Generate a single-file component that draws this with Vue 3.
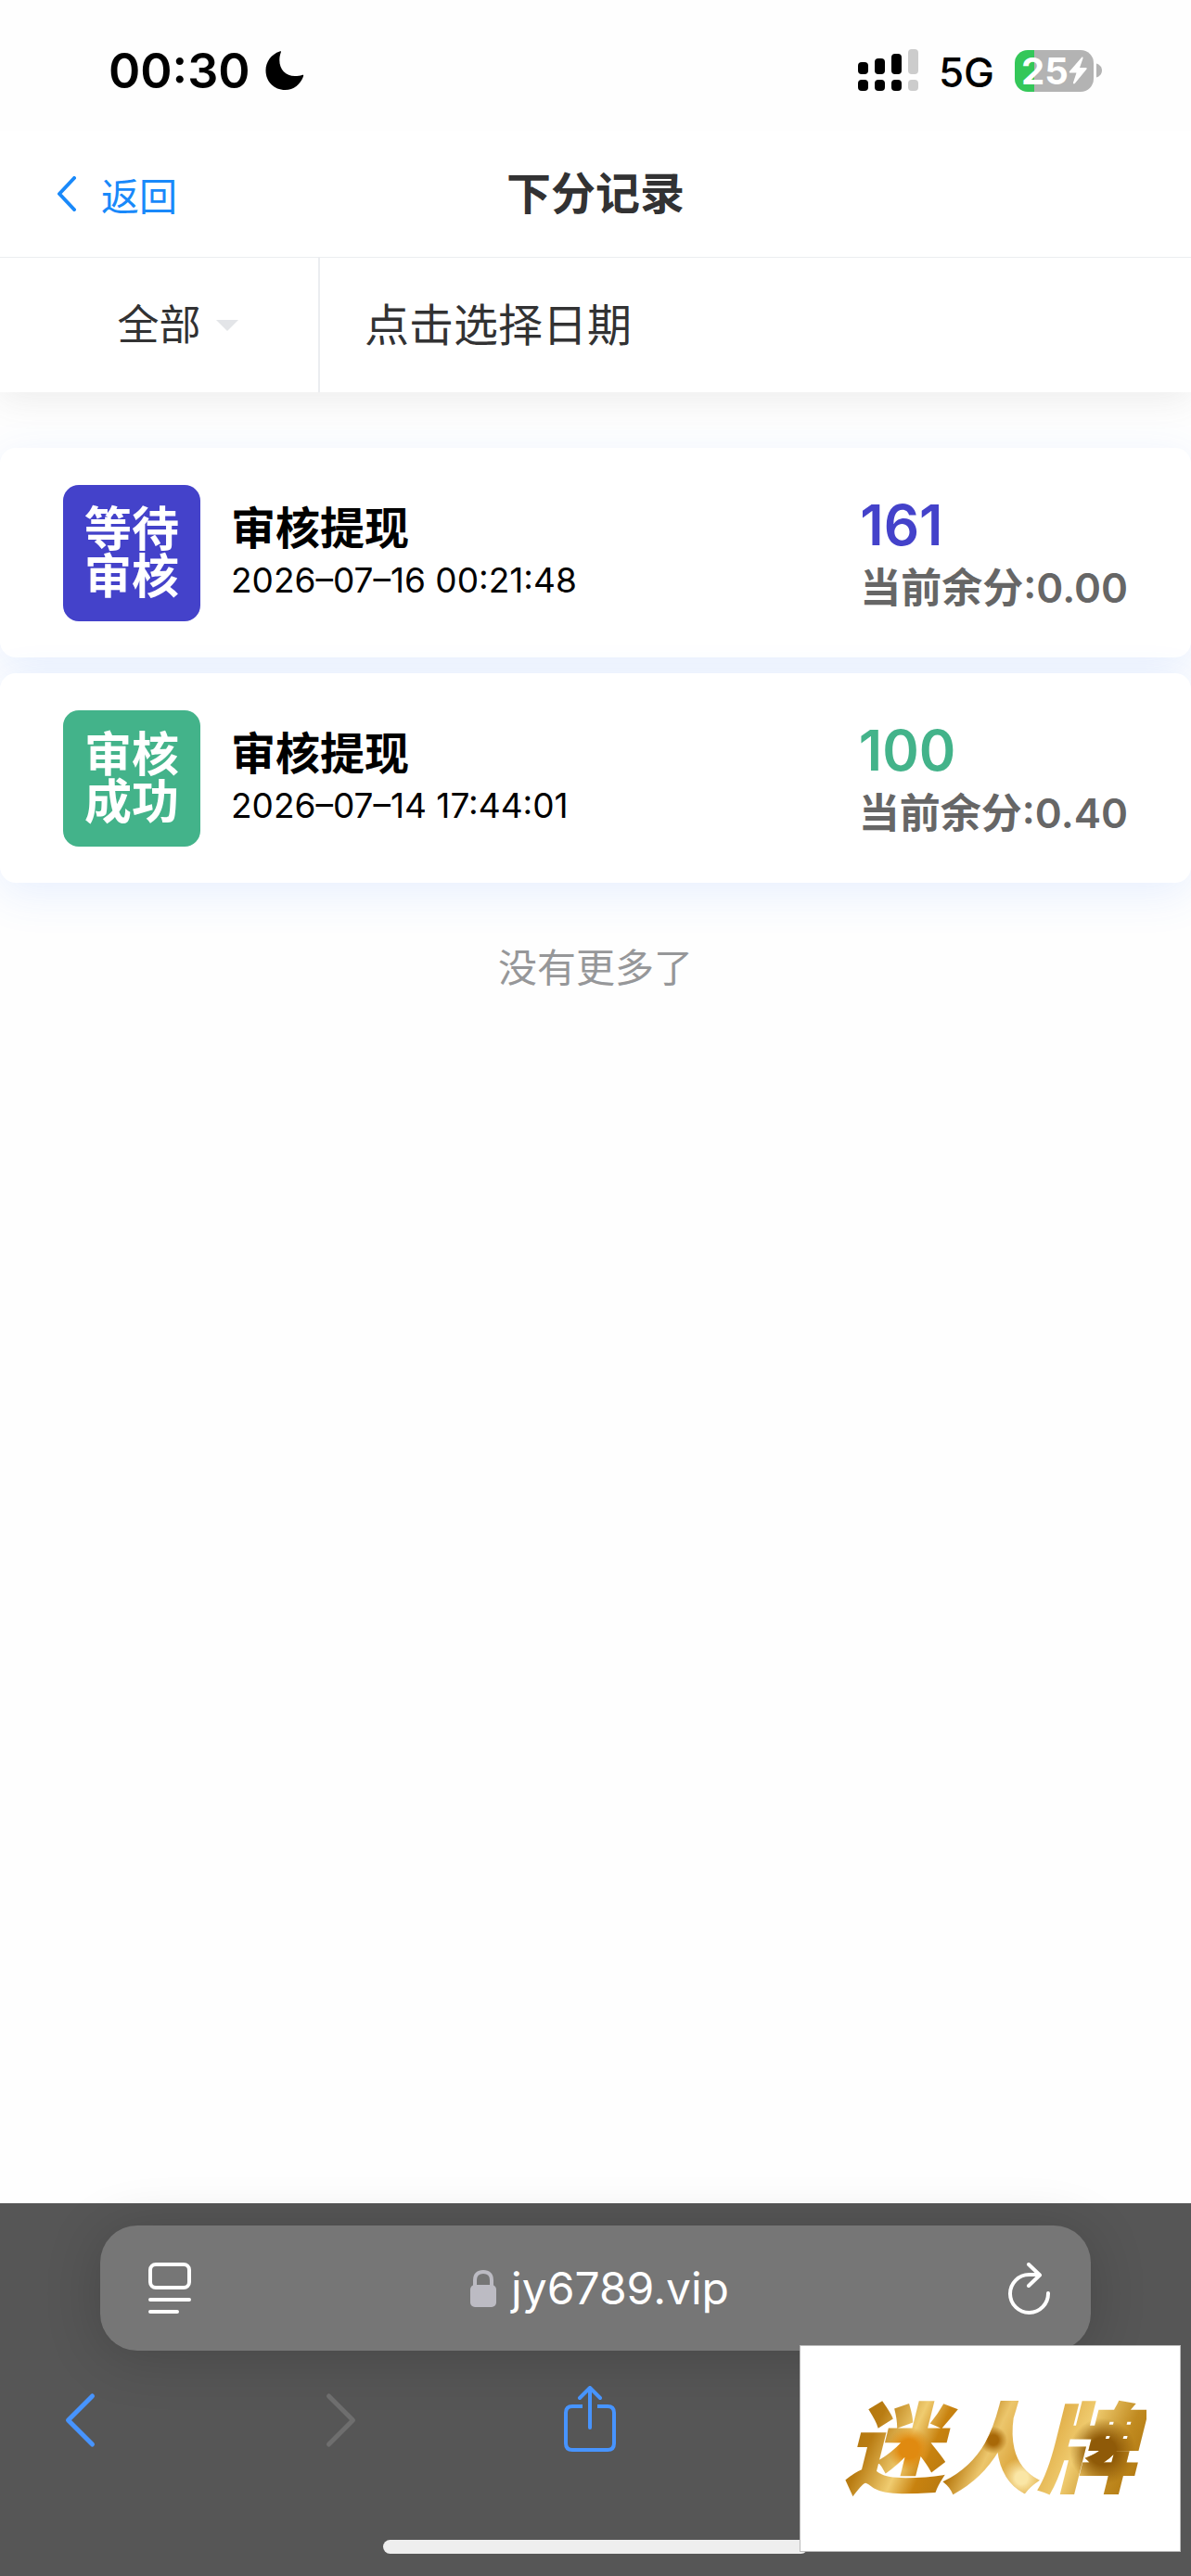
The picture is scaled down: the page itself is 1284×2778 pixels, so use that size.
<template>
  <div class="page">
    <div class="status-bar">
      <div class="status-left">
        <span class="clock">00:30</span>
        <svg class="moon" viewBox="0 0 42 42"><path d="M15.5 0.5C17 0 17.2 0.6 16.8 1.6C15.8 4 15.3 7 15.3 9.8C15.3 20 22 27 32 27C35 27 37.500 26.600 39.500 26C41 25.500 41.500 26 41 27.500C38 36 30.500 42 21.500 42C9.500 42 0.500 33 0.500 21C0.500 11.500 6.500 3.500 15.500 0.500Z" fill="#000" /></svg>
      </div>
      <div class="status-right">
        <svg class="signal" viewBox="0 0 66 46">
          <g fill="#000">
            <rect x="0" y="14" width="11" height="13" rx="4" />
            <rect x="18" y="10" width="11" height="17" rx="4" />
            <rect x="36" y="5" width="11" height="22" rx="4" />
            <rect x="0" y="33" width="11" height="12" rx="4" />
            <rect x="18" y="33" width="11" height="12" rx="4" />
            <rect x="36" y="33" width="11" height="12" rx="4" />
          </g>
          <g fill="#ccc">
            <rect x="54" y="0" width="11" height="27" rx="4" />
            <rect x="54" y="33" width="11" height="12" rx="4" />
          </g>
        </svg>
        <span class="network">5G</span>
        <div class="battery">
          <div class="battery-body">
            <span>25</span>
            <svg class="bolt" viewBox="0 0 20 30"><path d="M14 1L1 16C0.500 17 1 17.500 2 17.500H8.500L5 28C4.800 29.500 6 29.800 7 28.800L19.500 13.500C20 12.500 19.500 12 18.500 12H12L15.500 2C15.800 0.500 14.800 0.200 14 1Z" fill="#fff" /></svg>
          </div>
          <svg class="battery-nub" viewBox="0 0 6 16"><path d="M0 0.500C3.500 1.500 6 4.500 6 8S3.500 14.500 0 15.500Z" fill="#b3b3b3" /></svg>
        </div>
      </div>
    </div>

    <header class="nav-bar">
      <button class="back-btn">
        <svg viewBox="0 0 22 38"><path d="M19 2L3 19L19 36" fill="none" stroke="#1989fa" stroke-width="4" stroke-linecap="round" stroke-linejoin="round" /></svg>
        <span>返回</span>
      </button>
      <h1>下分记录</h1>
    </header>

    <div class="filter-bar">
      <label class="type-filter">
        <select v-model="selectedType" aria-label="类型">
          <option v-for="type in types" :key="type" :value="type">{{ type }}</option>
        </select>
        <svg viewBox="0 0 24 12"><path d="M0 0H24L12 12Z" fill="#e3e5e8" /></svg>
      </label>
      <button class="date-filter">点击选择日期</button>
    </div>

    <main class="records">
      <div v-for="item in records" :key="item.time" class="record" :class="item.status">
        <div class="badge">
          <span>{{ item.badge }}</span>
        </div>
        <div class="info">
          <h2>{{ item.title }}</h2>
          <time>{{ item.time }}</time>
        </div>
        <div class="score">
          <strong>{{ item.amount }}</strong>
          <span>当前余分:{{ item.balance }}</span>
        </div>
      </div>
      <p class="finished">没有更多了</p>
    </main>

    <footer class="browser-bar">
      <div class="address">
        <button aria-label="页面菜单">
          <svg class="reader-icon" viewBox="0 0 46 56" fill="none" stroke="#fff" stroke-width="4" stroke-linecap="round"><rect x="2" y="2" width="42" height="25" rx="6" /><path d="M2 40H44M2 53H31" /></svg>
        </button>
        <a href="#" class="domain">
          <svg class="lock-icon" viewBox="0 0 28 40"><path d="M5 18V11C5 5 8.500 2 14 2S23 5 23 11V18" fill="none" stroke="#bcbbc3" stroke-width="4" /><rect x="0" y="16" width="28" height="24" rx="5" fill="#bcbbc3" /></svg>
          <span>jy6789.vip</span>
        </a>
        <button aria-label="刷新">
          <svg class="reload-icon" viewBox="0 0 46 56" fill="none" stroke="#fff" stroke-width="4" stroke-linecap="round" stroke-linejoin="round"><path d="M43 33A20.500 20.500 0 1 1 22.500 13H33" /><path d="M22 2L34 13.500L22 25" /></svg>
        </button>
      </div>
      <nav class="tools">
        <button aria-label="后退">
          <svg viewBox="0 0 64 72"><path d="M41.500 11L15.500 37L41.500 63" fill="none" stroke="#4794ff" stroke-width="5" stroke-linecap="round" stroke-linejoin="round" /></svg>
        </button>
        <button aria-label="前进" disabled>
          <svg viewBox="0 0 64 72"><path d="M23.500 11L49.500 37L23.500 63" fill="none" stroke="#6e6e6e" stroke-width="5" stroke-linecap="round" stroke-linejoin="round" /></svg>
        </button>
        <button aria-label="分享">
          <svg viewBox="0 0 64 72" fill="none" stroke="#4794ff" stroke-width="4" stroke-linecap="round" stroke-linejoin="round"><path d="M24 22H13Q6 22 6 29V62Q6 69 13 69H51Q58 69 58 62V29Q58 22 51 22H40" stroke-linecap="butt" /><path d="M32 45V3M21 13L32 2L43 13" /></svg>
        </button>
      </nav>
      <div class="home-indicator"></div>
    </footer>

    <div class="float-logo"><span>迷人牌</span></div>
  </div>
</template>

<script setup>
import { ref } from 'vue';

const types = ['全部'];
const selectedType = ref('全部');

const records = ref([
  {
    status: 'pending',
    badge: '等待审核',
    title: '审核提现',
    time: '2026–07–16 00:21:48',
    amount: 161,
    balance: '0.00'
  },
  {
    status: 'success',
    badge: '审核成功',
    title: '审核提现',
    time: '2026–07–14 17:44:01',
    amount: 100,
    balance: '0.40'
  }
]);
</script>

<style>
body { margin: 0; background: #fefefe; }
</style>

<style scoped>
.page {
  min-height: 100vh; display: flex; flex-direction: column; color: #323233;
  font-family: Inter, "Noto Sans CJK SC", sans-serif;
}
button, select { font-family: inherit; color: inherit; background: transparent; border: none; padding: 0; margin: 0; cursor: pointer; }
svg { display: block; flex-shrink: 0; }

.status-bar { height: 141px; box-sizing: border-box; padding: 46px 96px 0 117px; display: flex; justify-content: space-between; color: #000; }
.status-left, .status-right { display: flex; align-items: center; height: 60px; }
.status-left { gap: 16px; }
.clock { font-size: 52px; font-weight: 600; }
.moon { width: 42px; height: 42px; }
.signal { width: 66px; height: 46px; }
.network { font-size: 44px; font-weight: 500; margin: 4px 22px 0 21px; }
.battery { display: flex; align-items: center; gap: 3px; }
.battery-body {
  width: 85px; height: 45px; border-radius: 14px; display: flex; align-items: center; justify-content: center;
  background: linear-gradient(to right, #34c759 25%, #b3b3b3 25%); color: #fff; font-size: 40px; font-weight: 700;
}
.bolt { width: 20px; height: 30px; }
.battery-nub { width: 6px; height: 16px; }

.nav-bar {
  position: relative; z-index: 1; height: 136px; display: grid; grid-template-columns: 1fr auto 1fr; align-items: center;
  background: #fff; border-bottom: 1px solid #ebedf0;
}
.back-btn { justify-self: start; display: flex; align-items: center; gap: 26px; padding-left: 61px; color: #1989fa; font-size: 41px; }
.back-btn svg { width: 22px; height: 38px; }
.nav-bar h1 { margin: 0; padding-bottom: 8px; font-size: 48px; font-weight: 700; }

.filter-bar { height: 145px; display: flex; background: #fff; box-shadow: 0 6px 36px rgba(100, 101, 102, 0.12); }
.type-filter { flex: 0 0 345px; box-sizing: border-box; padding-left: 40px; display: flex; align-items: center; justify-content: center; gap: 15px; border-right: 2px solid #ebedf0; }
.type-filter select { appearance: none; font-size: 45px; }
.type-filter svg { width: 24px; height: 12px; }
.date-filter { flex: 1; padding: 0 0 8px 48px; text-align: left; font-size: 48px; }

.records { flex: 1; padding-top: 60px; display: flex; flex-direction: column; gap: 17px; }
.record {
  height: 226px; box-sizing: border-box; padding: 0 68px; display: flex; align-items: center;
  background: #fff; border-radius: 17px; box-shadow: 0 12px 48px rgba(64, 128, 255, 0.12);
}
.badge {
  width: 148px; height: 147px; border-radius: 17px; display: flex; align-items: center; justify-content: center;
  color: #fff; font-size: 51px; font-weight: 700; line-height: 51px;
}
.badge span { width: 2em; }
.info { flex: 1; padding-left: 33px; color: #000; }
.info h2 { margin: 0; font-size: 48px; font-weight: 700; line-height: 60px; }
.info time { display: block; font-size: 37px; line-height: 52px; }
.score { display: flex; flex-direction: column; padding-top: 4px; }
.score strong { font-size: 60px; font-weight: 600; line-height: 72px; }
.score span { color: #666; font-size: 44px; font-weight: 600; line-height: 64px; }
.pending .badge { background: #4442ca; }
.pending strong { color: #4442ca; }
.success .badge { background: #43b38a; }
.success strong { color: #43b38a; }
.finished { margin: 43px 0 0; text-align: center; font-size: 42px; line-height: 64px; color: #969799; }

.browser-bar { position: relative; padding: 24px 0; background: #565656; display: flex; flex-direction: column; }
.address {
  margin: 0 108px; height: 135px; box-sizing: border-box; padding: 0 43px 0 52px; border-radius: 40px;
  display: flex; align-items: center; justify-content: space-between; background: #767676; box-shadow: 0 6px 60px rgba(0, 0, 0, 0.18);
}
.reader-icon, .reload-icon { width: 46px; height: 56px; }
.domain { display: flex; align-items: center; gap: 16px; color: #fff; font-size: 48px; text-decoration: none; }
.lock-icon { width: 28px; height: 40px; }
.tools { display: flex; gap: 209px; padding: 38px 58px 0; }
.tools svg { width: 64px; height: 72px; }
.home-indicator { width: 458px; height: 15px; margin: 94px auto 0; border-radius: 8px; background: #eee; }

.float-logo {
  position: fixed; right: 11px; bottom: 26px; width: 409px; height: 221px; background: #fff; border: 1px solid #bbb;
  display: flex; align-items: center; justify-content: center;
}
.float-logo span {
  padding: 0 12px; font-size: 104px; font-weight: 900; font-style: italic; line-height: 120px; color: transparent;
  -webkit-text-stroke: 2px transparent;
  background:
    radial-gradient(circle at 24% 50%, #e08a10 0 4%, transparent 9%),
    radial-gradient(circle at 51% 42%, #a86808 0 3%, transparent 8%),
    radial-gradient(circle at 86% 52%, #8f5a08 0 5%, transparent 12%),
    radial-gradient(circle at 60% 76%, #fae6a6 0 3%, transparent 10%),
    linear-gradient(115deg, #a86d05 0%, #b97c12 16%, #f0cc70 27%, #c8820f 34%, #b87a10 42%, #ecc66c 50%, #d9a035 60%, #f0cc70 74%, #c08a20 86%, #a86d05 100%);
  -webkit-background-clip: text; background-clip: text;
}
</style>
